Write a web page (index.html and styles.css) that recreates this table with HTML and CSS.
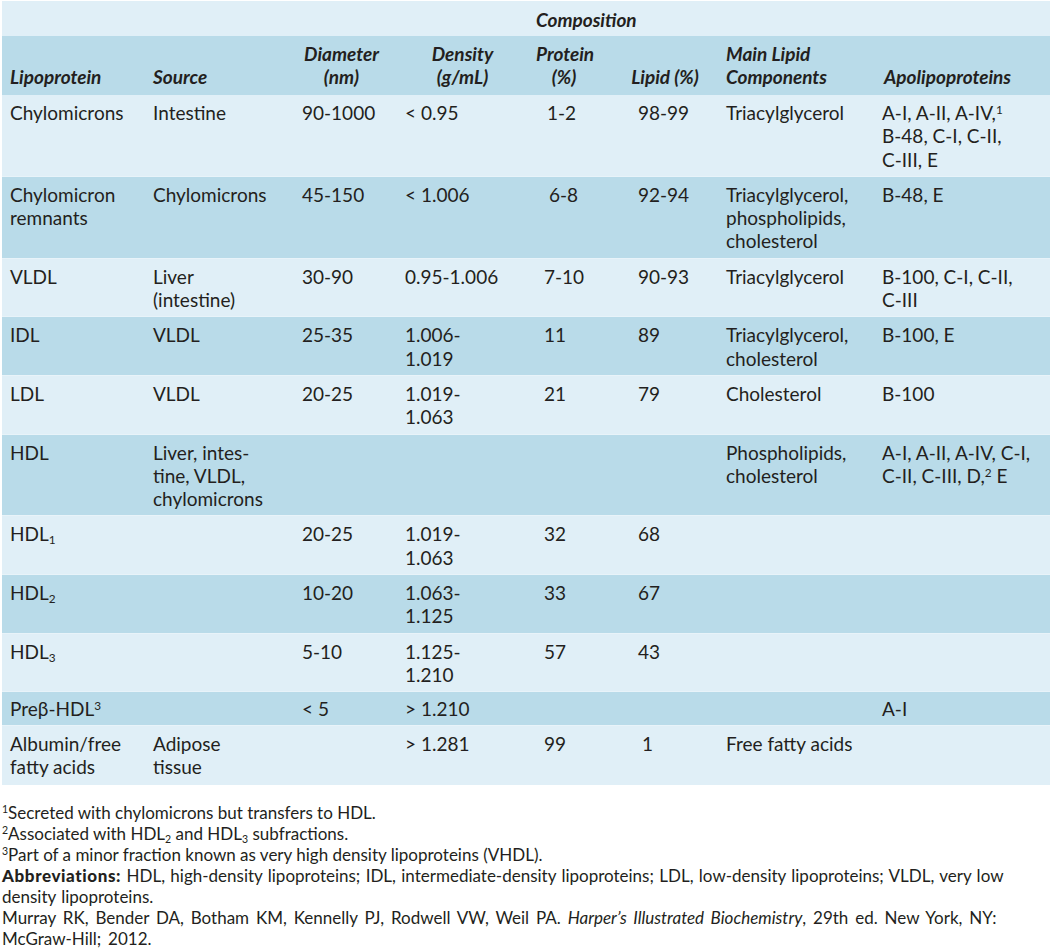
FILE: index.html
```html
<!DOCTYPE html>
<html lang="en">
<head>
<meta charset="utf-8">
<title>Lipoproteins</title>
<link rel="stylesheet" href="styles.css">
</head>
<body>
<table class="lipo">
  <colgroup>
    <col class="c-lipo"><col class="c-src"><col class="c-diam"><col class="c-dens">
    <col class="c-prot"><col class="c-lip"><col class="c-main"><col class="c-apo">
  </colgroup>
  <thead>
    <tr class="row-comp">
      <th colspan="4"></th>
      <th colspan="2" class="comp">Composition</th>
      <th colspan="2"></th>
    </tr>
    <tr class="row-head">
      <th>Lipoprotein</th>
      <th>Source</th>
      <th class="ctr">Diameter<br>(nm)</th>
      <th class="ctr dens">Density<br>(g/mL)</th>
      <th class="ctr prot">Protein<br>(%)</th>
      <th class="ctr">Lipid (%)</th>
      <th>Main Lipid<br>Components</th>
      <th class="apo">Apolipoproteins</th>
    </tr>
  </thead>
  <tbody>
    <tr class="lt first">
      <td>Chylomicrons</td><td>Intestine</td><td>90-1000</td><td class="dens">&lt; 0.95</td>
      <td class="prot p12">1-2</td><td class="lip">98-99</td><td>Triacylglycerol</td>
      <td class="apo">A-I, A-II, A-IV,<sup>1</sup><br>B-48, C-I, C-II,<br>C-III, E</td>
    </tr>
    <tr class="dk">
      <td>Chylomicron<br>remnants</td><td>Chylomicrons</td><td>45-150</td><td class="dens">&lt; 1.006</td>
      <td class="prot p68">6-8</td><td class="lip">92-94</td><td>Triacylglycerol,<br>phospholipids,<br>cholesterol</td>
      <td class="apo">B-48, E</td>
    </tr>
    <tr class="lt">
      <td>VLDL</td><td>Liver<br>(intestine)</td><td>30-90</td><td class="dens">0.95-1.006</td>
      <td class="prot">7-10</td><td class="lip">90-93</td><td>Triacylglycerol</td>
      <td class="apo">B-100, C-I, C-II,<br>C-III</td>
    </tr>
    <tr class="dk">
      <td>IDL</td><td>VLDL</td><td>25-35</td><td class="dens">1.006-<br>1.019</td>
      <td class="prot">11</td><td class="lip">89</td><td>Triacylglycerol,<br>cholesterol</td>
      <td class="apo">B-100, E</td>
    </tr>
    <tr class="lt">
      <td>LDL</td><td>VLDL</td><td>20-25</td><td class="dens">1.019-<br>1.063</td>
      <td class="prot">21</td><td class="lip">79</td><td>Cholesterol</td>
      <td class="apo">B-100</td>
    </tr>
    <tr class="dk">
      <td>HDL</td><td>Liver, intes-<br>tine, VLDL,<br>chylomicrons</td><td></td><td class="dens"></td>
      <td class="prot"></td><td class="lip"></td><td>Phospholipids,<br>cholesterol</td>
      <td class="apo">A-I, A-II, A-IV, C-I,<br>C-II, C-III, D,<sup>2</sup> E</td>
    </tr>
    <tr class="lt">
      <td>HDL<sub>1</sub></td><td></td><td>20-25</td><td class="dens">1.019-<br>1.063</td>
      <td class="prot">32</td><td class="lip">68</td><td></td><td class="apo"></td>
    </tr>
    <tr class="dk">
      <td>HDL<sub>2</sub></td><td></td><td>10-20</td><td class="dens">1.063-<br>1.125</td>
      <td class="prot">33</td><td class="lip">67</td><td></td><td class="apo"></td>
    </tr>
    <tr class="lt">
      <td>HDL<sub>3</sub></td><td></td><td>5-10</td><td class="dens">1.125-<br>1.210</td>
      <td class="prot">57</td><td class="lip">43</td><td></td><td class="apo"></td>
    </tr>
    <tr class="dk single">
      <td>Preβ-HDL<sup>3</sup></td><td></td><td>&lt; 5</td><td class="dens">&gt; 1.210</td>
      <td class="prot"></td><td class="lip"></td><td></td><td class="apo">A-I</td>
    </tr>
    <tr class="lt last">
      <td>Albumin/free<br>fatty acids</td><td>Adipose<br>tissue</td><td></td><td class="dens">&gt; 1.281</td>
      <td class="prot">99</td><td class="lip l1">1</td><td>Free fatty acids</td><td class="apo"></td>
    </tr>
  </tbody>
</table>
<div class="notes">
  <p><sup>1</sup>Secreted with chylomicrons but transfers to HDL.</p>
  <p><sup>2</sup>Associated with HDL<sub>2</sub> and HDL<sub>3</sub> subfractions.</p>
  <p><sup>3</sup>Part of a minor fraction known as very high density lipoproteins (VHDL).</p>
  <p class="wide"><b>Abbreviations:</b> HDL, high-density lipoproteins; IDL, intermediate-density lipoproteins; LDL, low-density lipoproteins; VLDL, very low<br>density lipoproteins.</p>
  <p class="wider">Murray RK, Bender DA, Botham KM, Kennelly PJ, Rodwell VW, Weil PA. <i>Harper’s Illustrated Biochemistry</i>, 29th ed. New York, NY:<br>McGraw-Hill; 2012.</p>
</div>
</body>
</html>
```
FILE: styles.css
```css
html, body {
  margin: 0;
  padding: 0;
  background: #ffffff;
}
body {
  padding: 1px 2px 0 2px;
  font-family: Lato, "Liberation Sans", sans-serif;
  color: #231f20;
}
.lipo {
  width: 1048px;
  border-collapse: separate;
  border-spacing: 0;
  table-layout: fixed;
  font-size: 19px;
  line-height: 23.3px;
}
.c-lipo { width: 143px; }
.c-src { width: 149px; }
.c-diam { width: 95px; }
.c-dens { width: 139px; }
.c-prot { width: 84px; }
.c-lip { width: 106px; }
.c-main { width: 159px; }
.c-apo { width: 173px; }

.lipo th {
  font-weight: 700;
  font-style: italic;
  text-align: left;
  vertical-align: bottom;
  padding: 0 8px;
  line-height: 23px;
}
.row-comp { background: #e0eff7; }
.row-comp th { height: 35px; padding-bottom: 5px; box-sizing: border-box; }
.comp { text-align: center; }
.row-head { background: #b9dbe9; }
.row-head th { height: 58px; padding-bottom: 6px; box-sizing: border-box; }
.lipo th.ctr { text-align: center; }
.lipo th.dens { padding-left: 16px; }
.lipo th.prot { padding-right: 20px; }
.lipo th.apo { padding-left: 7px; }

.lipo td {
  vertical-align: top;
  padding: 6px 8px 5px 8px;
  font-weight: 400;
  border-top: 1px solid #e8f3f9;
}
.lipo tr.first td { border-top-color: #b9dbe9; }
.lipo td.dens { padding-left: 16px; }
.lipo td.prot { padding-left: 16px; }
.lipo td.p12 { padding-left: 19px; }
.lipo td.p68 { padding-left: 21px; }
.lipo td.lip { padding-left: 26px; }
.lipo td.l1 { padding-left: 30px; }
.lipo td.apo { padding-left: 5px; padding-right: 2px; }
.lipo tr.single td { padding-top: 5px; padding-bottom: 4px; }
.lipo tr.last td { padding-bottom: 7px; }

.lt { background: #e0eff7; }
.dk { background: #b9dbe9; }

sup, sub {
  font-size: 62%;
  line-height: 0;
}
sub { vertical-align: -0.25em; }
sup { vertical-align: 0.55em; }

.notes {
  margin-top: 17px;
  font-size: 17px;
  line-height: 21px;
}
.notes p { margin: 0; }
.notes p.wide { word-spacing: 1px; }
.notes p.wider { word-spacing: 2.5px; }
.notes b { font-weight: 900; letter-spacing: 0.6px; }
```
